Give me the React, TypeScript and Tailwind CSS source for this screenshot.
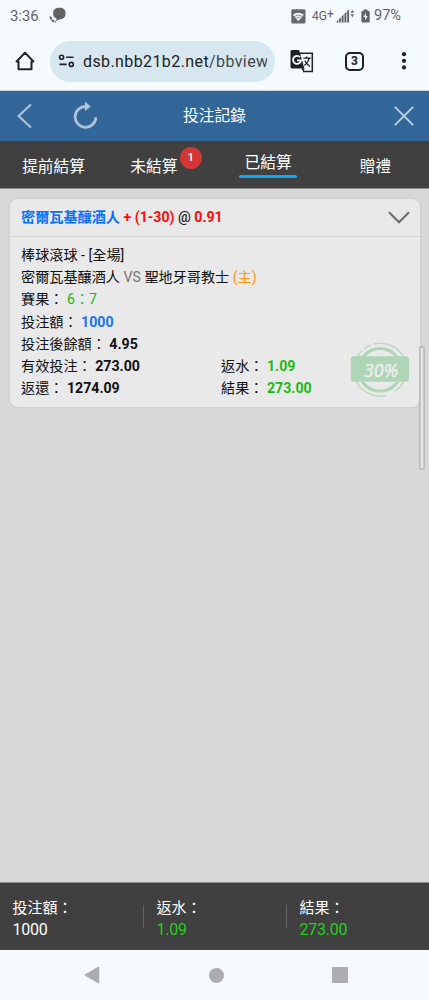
import type { ReactNode } from 'react';

const GREEN = 'text-[#23b814]';

export default function App() {
  return (
    <div
      lang="zh-Hant"
      className="w-[429px] h-[1000px] flex flex-col overflow-hidden bg-[#d8d8d8] font-['Roboto','Noto_Sans_CJK_TC',sans-serif]">
      <StatusBar />
      <BrowserBar />
      <PageHeader />
      <TabBar />
      <main className="relative flex-1 px-[10px] pt-[10px]">
        <BetCard />
        {/* Scrollbar thumb */}
        <div className="absolute left-[419px] top-[157px] w-[6px] h-[124px] rounded-[2px] border border-[#b9b9b9] bg-[#c8c8c8] p-px">
          <div className="w-full h-full bg-[#e6e6e6]" />
        </div>
      </main>
      <Totals />
      <SystemNav />
    </div>
  );
}

function StatusBar() {
  return (
    <div className="h-8 shrink-0 flex items-center bg-[#f5faff] pl-[10px] text-[#5f6368]">
      <span className="w-[39px] text-[14.8px] leading-8">3:36</span>
      <svg width="18" height="18" viewBox="0 0 18 18" className="mr-[224px]">
        <path d="M9 0.8h2.5a5 5 0 0 1 5 5v1.4a5 5 0 0 1-5 5H11L7.2 14l.3-2.4a5 5 0 0 1-3.4-4.5V5.8a5 5 0 0 1 4.9-5Z" fill="#636466" />
        <path d="M1.5 9.5c.1 2.8 1.9 5 5.6 5.2" fill="none" stroke="#636466" strokeWidth="2" strokeDasharray="3 0.8" />
      </svg>
      <svg width="15" height="15" viewBox="0 0 15 15" className="mr-[6px]">
        <rect x="0.3" y="0.2" width="14.2" height="14.4" rx="1.5" fill="#68696b" />
        <path d="M2 5.7a8.3 8.3 0 0 1 10.8 0L7.4 12.3Z" fill="#f5faff" />
        <path d="M3.7 7.4a6 6 0 0 1 7.4 0M5.3 9.1a3.4 3.4 0 0 1 4.2 0" fill="none" stroke="#68696b" strokeWidth=".8" />
      </svg>
      <span className="w-[24px] text-[12px] whitespace-nowrap">4G<span className="relative -top-[2px]">+</span></span>
      <svg width="19" height="14" viewBox="0 0 19 14" fill="#636466" className="mr-[6px]">
        <path d="M0 13.5 2.2 11v2.5ZM2.8 10.3l2-2v5.2h-2ZM5.6 7.6l2-2v7.9h-2ZM8.4 4.8l2-2v10.7h-2ZM11.2 2l1.9-1.6v13.1h-1.9Z" />
        <path d="m16.3.8 1.7 3h-3.4ZM16.3 8.3l-1.7-3H18Z" />
      </svg>
      <svg width="9" height="14" viewBox="0 0 9 14" className="mr-[4px]">
        <path d="M2.5 0.5h4V2h1.2q1 0 1 1v9.5q0 1-1 1H1.4q-1 0-1-1V3q0-1 1-1h1.1Z" fill="#636466" />
        <path d="M5 4 2.3 8h1.8v3.2L6.8 7H5Z" fill="#f5faff" />
      </svg>
      <span className="text-[14.5px]">97%</span>
    </div>
  );
}

function BrowserBar() {
  return (
    <div className="h-[59px] shrink-0 flex items-center bg-[#f5faff] border-b border-[#cdd5dc] text-[#202124]">
      <svg width="20" height="20" viewBox="0 0 20 20" className="ml-[15px] mr-[15px]" fill="none" stroke="currentColor" strokeWidth="2" strokeLinejoin="round">
        <path d="M1.6 10.4 10 1.8l8.4 8.6h-1.9v7.8h-13v-7.8Z" />
      </svg>
      <div className="w-[225px] h-[41px] rounded-full bg-[#d7e7ef] flex items-center pl-[8px] pr-[7px]">
        <svg width="18" height="14" viewBox="0 0 18 14" fill="none" stroke="currentColor" strokeWidth="1.6" className="shrink-0">
          <circle cx="3.6" cy="3.2" r="2" />
          <path d="M8 3.2h7.5M1.5 10.4h7" />
          <circle cx="13.3" cy="10.4" r="2" />
        </svg>
        <span className="ml-[7px] w-[184px] overflow-hidden whitespace-nowrap pt-px text-[16px] tracking-[0.4px]">
          dsb.nbb21b2.net<span className="text-[#3f474c]">/bbview</span>
        </span>
      </div>
      <svg width="24" height="24" viewBox="0 0 24 24" className="ml-[15px]">
        <path d="M9 4.2h13.3v18.2H13" fill="none" stroke="#202124" strokeWidth="1.5" />
        <path d="M2 1h7l5.4 18.5H2A1.5 1.5 0 0 1 .5 18V2.5A1.5 1.5 0 0 1 2 1Z" fill="#202124" />
        <path d="m11.2 19.4 2.2 3.3 1.2-3.3Z" fill="#202124" />
        <path d="M10 8.2A4 4 0 1 0 11 11.4H7" fill="none" stroke="#f5faff" strokeWidth="1.8" />
        <path d="M13.3 9.2h7.5M16.6 7.4v1.8M19.2 9.4c-.6 3-2.5 5.3-4.8 7.2M14.8 11.5c1 2.3 2.8 4.3 5 6" fill="none" stroke="#202124" strokeWidth="1.3" />
      </svg>
      <div className="ml-[31px] w-[19px] h-[19px] rounded-[5px] border-2 border-[#202124] flex items-center justify-center text-[12px] leading-none font-bold">
        3
      </div>
      <svg width="6" height="20" viewBox="0 0 6 20" className="ml-[37px]" fill="currentColor">
        <circle cx="3" cy="3.2" r="2.1" />
        <circle cx="3" cy="9.8" r="2.1" />
        <circle cx="3" cy="16.4" r="2.1" />
      </svg>
    </div>
  );
}

function PageHeader() {
  return (
    <header className="h-[50px] shrink-0 flex items-center bg-[#336799] text-white">
      <svg width="15" height="26" viewBox="0 0 15 26" className="ml-[17px] mr-[41px]" fill="none" stroke="#afc4d8" strokeWidth="2">
        <path d="M14 1.4 1.6 13 14 24.6" />
      </svg>
      <svg width="24" height="28" viewBox="0 0 24 28" className="-mt-[3px]">
        <path d="M13 5.5A10.4 10.4 0 1 0 22.9 16.4" fill="none" stroke="#afc4d8" strokeWidth="2.8" />
        <path d="M12 0.6 17.8 5.6 12 10Z" fill="#afc4d8" />
      </svg>
      <h1 className="ml-[86px] w-[64px] whitespace-nowrap text-[15.75px] leading-6">投注記錄</h1>
      <svg width="20" height="20" viewBox="0 0 20 20" className="ml-[147px]" fill="none" stroke="#bdd0e2" strokeWidth="1.9">
        <path d="m.8.8 18.4 18.4M19.2.8.8 19.2" />
      </svg>
    </header>
  );
}

function TabBar() {
  return (
    <nav className="h-[48px] shrink-0 grid grid-cols-4 border-b border-[#8f8f8f] bg-[#404040] text-[15.75px] leading-6 text-white">
      <button className="pt-[4px]">提前結算</button>
      <button className="relative pt-[4px] pr-[14px]">
        未結算
        <span className="absolute left-[72.5px] top-[6px] w-[22px] h-[22px] rounded-full bg-[#d43636] text-[11.5px] leading-[21px] font-medium">
          1
        </span>
      </button>
      <button className="flex flex-col items-center pt-[10px]">
        <span>已結算</span>
        <span className="h-[3px] w-[58px] rounded-full bg-[#0ca8f5]" />
      </button>
      <button className="pt-[4px]">贈禮</button>
    </nav>
  );
}

function BetCard() {
  return (
    <section className="relative w-[409.5px] h-[208px] rounded-[8px] bg-[#e9e9e9] shadow-[0_0_3px_rgba(0,0,0,0.1)] text-[14.15px] text-[#111]">
      <div className="h-[38px] flex items-center justify-between border-b border-[#d4d4d4] pl-[11px] pr-[10px]">
        <div className="font-bold text-[#ff0a0a] whitespace-nowrap">
          <span className="text-[#0b70fb]">密爾瓦基釀酒人</span> + (1-30) <span className="font-medium text-[#222]">@</span> 0.91
        </div>
        <svg width="22" height="13" viewBox="0 0 22 13" fill="none" stroke="#6c6c6c" strokeWidth="2.1">
          <path d="m1 1.2 10 10 10-10" />
        </svg>
      </div>
      <div className="pt-[7px] pl-[11px] leading-[22.2px] whitespace-nowrap">
        <p>棒球滾球 - [全場]</p>
        <p>
          密爾瓦基釀酒人 <span className="text-[#777]">VS</span> 聖地牙哥教士 <span className="text-[#ff9416]">(主)</span>
        </p>
        <Field label="賽果"><span className={GREEN}>6：7</span></Field>
        <Field label="投注額"><b className="text-[#1673fa]">1000</b></Field>
        <Field label="投注後餘額"><b>4.95</b></Field>
        <div className="grid grid-cols-[200px_1fr]">
          <Field label="有效投注"><b>273.00</b></Field>
          <Field label="返水"><b className={GREEN}>1.09</b></Field>
          <Field label="返還"><b>1274.09</b></Field>
          <Field label="結果"><b className={GREEN}>273.00</b></Field>
        </div>
      </div>
      <RebateStamp />
    </section>
  );
}

function Field({ label, children }: {label: string;children: ReactNode;}) {
  return (
    <p>
      {label}： {children}
    </p>
  );
}

// Rebate badge stamped over the corner of the card
function RebateStamp() {
  return (
    <svg width="60" height="56" viewBox="0 0 60 56" className="absolute left-[340px] top-[143px]">
      <g fill="none" stroke="#aed6b6">
        <circle cx="30" cy="27.8" r="21.3" strokeWidth="3" />
        <path d="M24 2A26.3 26.3 0 0 1 54 16.4M14 7a26.3 26.3 0 0 1 7-4M7.2 14.8a26.3 26.3 0 0 1 5-6.2M6.4 39.8a26.3 26.3 0 0 0 30 13.5M45.5 49a26.3 26.3 0 0 0 8.5-10" strokeWidth="1.1" />
      </g>
      <rect x="0.8" y="14.2" width="58.2" height="25.6" rx="3" fill="#aed6b6" />
      <text x="31" y="34.5" textAnchor="middle" fontFamily="Noto Sans" fontStyle="italic" fontSize="18" textLength="34" lengthAdjust="spacingAndGlyphs" fill="#ededed" stroke="#ededed" strokeWidth=".4">
        30%
      </text>
    </svg>
  );
}

function Totals() {
  return (
    <footer className="h-[68px] shrink-0 grid grid-cols-3 items-center border-t border-[#929292] bg-[#404040] text-[15px] text-white">
      <Total label="投注額" value="1000" />
      <Total label="返水" value="1.09" className="border-l border-[#646464] text-[#23d01e]" />
      <Total label="結果" value="273.00" className="border-l border-[#646464] text-[#23d01e]" />
    </footer>
  );
}

function Total({ label, value, className = '' }: {label: string;value: string;className?: string;}) {
  return (
    <div className={`h-[23px] flex flex-col justify-center pt-[4px] pl-[12.5px] ${className}`}>
      <span className="leading-[22px] text-white">{label}：</span>
      <span className="text-[16px] leading-[22px] tracking-[-0.25px]">{value}</span>
    </div>
  );
}

function SystemNav() {
  return (
    <div className="h-[50px] shrink-0 flex items-center bg-[#f5faff] pl-[84px]">
      <svg width="16" height="18" viewBox="0 0 16 18">
        <path d="M14.5 1.5v15L1.5 9Z" fill="#adadb1" stroke="#adadb1" strokeWidth="1.5" strokeLinejoin="round" />
      </svg>
      <div className="ml-[109px] w-[15px] h-[15px] rounded-full bg-[#adadb1]" />
      <div className="ml-[108px] w-[16px] h-[16px] rounded-[1px] bg-[#adadb1]" />
    </div>
  );
}
